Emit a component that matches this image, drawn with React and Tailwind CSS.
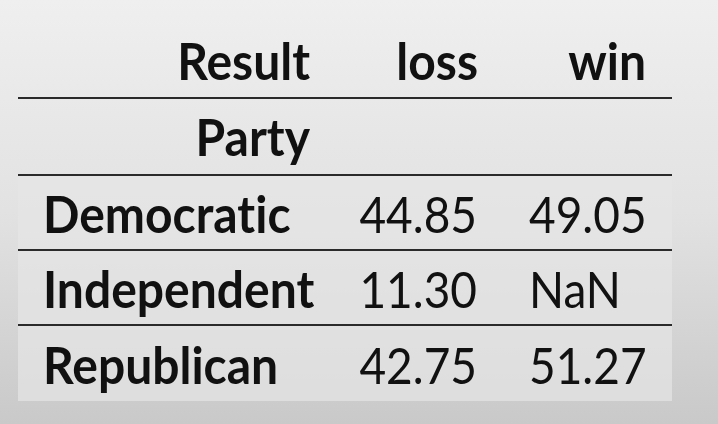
export default function App() {
  const rows = [
    ["Democratic", "44.85", "49.05"],
    ["Independent", "11.30", "NaN"],
    ["Republican", "42.75", "51.27"],
  ];
  return (
    <div
      className="w-[718px] h-[424px] overflow-hidden bg-gradient-to-b from-[#efefef] via-[#e2e2e2] to-[#c9c9c9] text-[#111] [font-variant-ligatures:none]"
      style={{ fontFamily: "Lato, 'Liberation Sans', sans-serif" }}
    >
      <div className="ml-[18px] pt-[24px] w-[654px] text-[48px] leading-none">
        <div className="flex h-[75px] items-center font-bold border-b-2 border-[#2a2a2a]">
          <div className="w-[312px] pr-[20px] text-right">
            <span className="inline-block scale-y-[1.06]">Result</span>
          </div>
          <div className="w-[168px] pr-[20px] text-right">
            <span className="inline-block scale-y-[1.06]">loss</span>
          </div>
          <div className="w-[174px] pr-[26px] text-right">
            <span className="inline-block scale-y-[1.06]">win</span>
          </div>
        </div>
        <div className="flex h-[77px] items-center font-bold border-b-2 border-[#2a2a2a]">
          <div className="w-[312px] pr-[20px] text-right">
            <span className="inline-block scale-y-[1.06]">Party</span>
          </div>
        </div>
        {rows.map((r, i) => (
          <div
            key={r[0]}
            className={
              "flex h-[75px] items-center bg-[#e6e6e6]/70 " +
              (i < 2 ? "border-b-2 border-[#2a2a2a]" : "")
            }
          >
            <div className="w-[312px] pl-[25px] font-bold pt-[2px]">
              <span className="inline-block scale-y-[1.06]">{r[0]}</span>
            </div>
            <div className="w-[168px] pr-[21px] text-right text-[46px] pt-[2px]">
              <span className="inline-block scale-y-[1.1]">{r[1]}</span>
            </div>
            <div className="w-[174px] pl-[31px] text-[46px] pt-[2px]">
              <span className="inline-block scale-y-[1.1]">{r[2]}</span>
            </div>
          </div>
        ))}
      </div>
    </div>
  );
}
